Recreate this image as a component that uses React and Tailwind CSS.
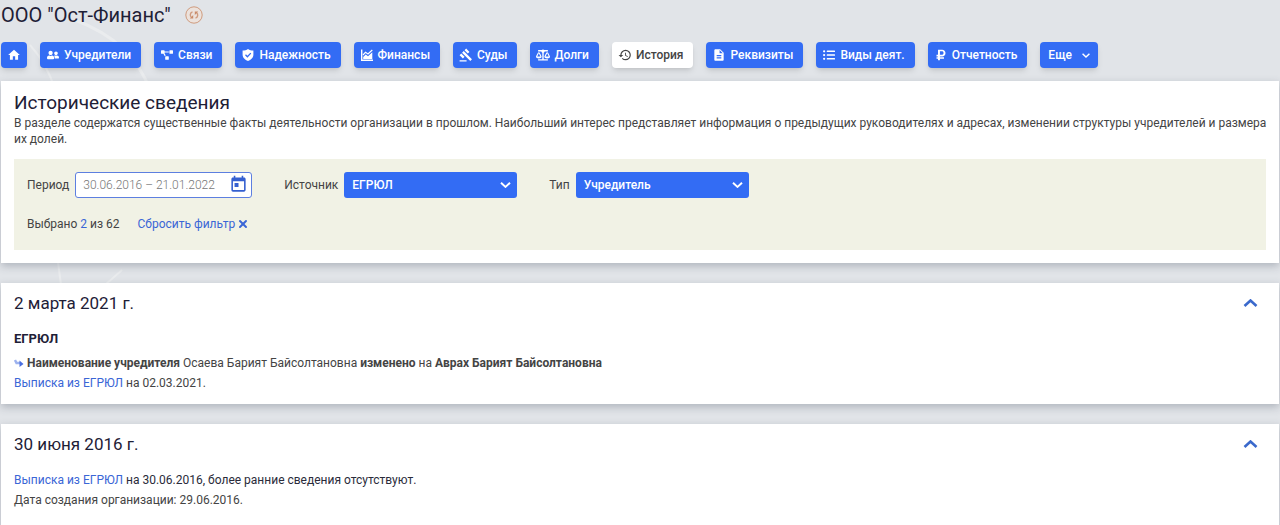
import React, { useState } from 'react';
import { FaBalanceScale, FaListUl, FaProjectDiagram, FaRubleSign, FaUserFriends } from 'react-icons/fa';
import { MdDescription, MdGavel, MdHistory, MdHome, MdToday } from 'react-icons/md';
import { X } from 'lucide-react';

function ShieldIcon({ className }) {
  return (
    <svg className={className} viewBox="0 0 12 12" fill="none">
      <path d="M6 0C4.500 1 2.700 1.500.6 1.500V5.500C.6 8.700 3 11 6 12c3-1 5.400-3.300 5.400-6.500v-4C9.300 1.500 7.500 1 6 0z" fill="currentColor" />
      <path d="M3.500 5.800l1.900 1.900 3.400-3.600" stroke="#336cf4" strokeWidth="1.3" />
    </svg>
  );
}

function ChartIcon({ className }) {
  return (
    <svg className={className} viewBox="0 0 12 12" fill="none" stroke="currentColor">
      <path d="M.7.500v10.800H12" strokeWidth="1.4" />
      <path d="M2 6l2.500-2.800L7 5l4.300-4" strokeWidth="1.2" />
      <path d="M2.200 10V8l2.500-2.600L7 7.200 11.300 3.200V10z" fill="currentColor" stroke="none" />
    </svg>
  );
}

function Chevron({ className }) {
  return (
    <svg className={className} viewBox="0 0 14 8" fill="none" stroke="currentColor" strokeWidth="2.6">
      <path d="M1 1l6 5.500L13 1" />
    </svg>
  );
}

const tabs = [
  { label: 'Учредители', icon: FaUserFriends, iconClass: 'p-px' },
  { label: 'Связи', icon: FaProjectDiagram, iconClass: 'p-px' },
  { label: 'Надежность', icon: ShieldIcon, iconClass: 'p-px' },
  { label: 'Финансы', icon: ChartIcon, iconClass: 'p-px' },
  { label: 'Суды', icon: MdGavel },
  { label: 'Долги', icon: FaBalanceScale },
  { label: 'История', icon: MdHistory, active: true },
  { label: 'Реквизиты', icon: MdDescription },
  { label: 'Виды деят.', icon: FaListUl, iconClass: 'p-px' },
  { label: 'Отчетность', icon: FaRubleSign, iconClass: 'p-px' },
];

function Tab({ label, icon: Icon, iconClass = '', active }) {
  const colors = active ? 'bg-white text-[#444]' : 'bg-[#336cf4] text-white';
  return (
    <a
      href="#"
      className={`flex h-[26px] items-center gap-1 rounded pl-1.5 pr-2.5 font-medium whitespace-nowrap shadow-md ${colors}`}
    >
      <Icon className={`size-[14px] shrink-0 ${iconClass}`} />
      {label}
    </a>
  );
}

function FilterSelect({ id, label, options }) {
  return (
    <div className="flex items-center gap-1.5">
      <label htmlFor={id}>{label}</label>
      <div className="relative">
        <select
          id={id}
          className="h-[26px] w-[173px] appearance-none rounded-[3px] bg-[#336cf4] pl-2 pr-6 font-medium text-white"
        >
          {options.map((o) => (
            <option key={o}>{o}</option>
          ))}
        </select>
        <Chevron className="pointer-events-none absolute top-[10px] right-[6px] h-[6px] w-[11px] text-white" />
      </div>
    </div>
  );
}

function Card({ children }) {
  return (
    <section className="mx-px bg-white px-[13px] shadow-[0_3px_8px_rgba(60,70,90,0.3)]">{children}</section>
  );
}

function HistoryCard({ date, children }) {
  const [open, setOpen] = useState(true);
  return (
    <Card>
      <div className="flex h-10 items-center justify-between pr-2">
        <h2 className="text-[17px] text-[#1e2036]">{date}</h2>
        <button type="button" aria-label={date} aria-expanded={open} onClick={() => setOpen(!open)}>
          <Chevron className={`h-2 w-[15px] text-[#3a69cc] ${open ? 'rotate-180' : ''}`} />
        </button>
      </div>
      {open && children}
    </Card>
  );
}

export default function App() {
  return (
    <div className="min-h-screen overflow-hidden bg-[#e1e4e8] font-[Roboto,sans-serif] text-[12px] leading-4 text-[#444]">
      <div className="relative">
        <svg className="absolute top-0 left-0 h-[290px] w-[350px]" viewBox="0 0 350 290" fill="none" stroke="#eaecee">
          <path d="M75 20C115 35 138 58 150 90" strokeWidth="3" />
          <path d="M30 45Q48 65 55 90M105 285L122 270M58 262L61 285" strokeWidth="2" />
        </svg>

        <header className="relative">
          <div className="flex h-[30px] items-center gap-3.5 pl-px">
            <h1 className="text-[20px] leading-6 text-[#1e2036]">ООО "Ост-Финанс"</h1>
            <svg className="size-[18px]" viewBox="0 0 18 18" fill="none" stroke="#cf9b7e">
              <circle cx="9" cy="9" r="8.200" strokeWidth="1" fill="#ece2dc" />
              <path d="M7.500 5.800C5 6.500 4.600 9.800 6.500 11.500M10.500 12.200C13 11.500 13.400 8.200 11.500 6.500" strokeWidth="1.400" />
              <path d="M4.800 12.500h3.400V9zM13.200 5.500H9.800V9z" fill="#c98a68" stroke="none" />
            </svg>
          </div>
          <nav className="flex flex-wrap gap-[13px] px-px pt-3 pb-[13px]">
            <a
              href="#"
              aria-label="Главная"
              className="flex h-[26px] w-[26px] items-center justify-center rounded bg-[#336cf4] text-white shadow-md"
            >
              <MdHome className="size-[14px]" />
            </a>
            {tabs.map((t) => (
              <Tab key={t.label} {...t} />
            ))}
            <button
              type="button"
              className="flex h-[26px] items-center gap-2.5 rounded bg-[#336cf4] px-2 font-medium text-white shadow-md"
            >
              Еще
              <Chevron className="h-[5px] w-2" />
            </button>
          </nav>
        </header>

        <main className="relative flex flex-col gap-5">
          <Card>
            <h2 className="pt-[10px] text-[19px] leading-6 text-[#1e2036]">Исторические сведения</h2>
            <p className="-mr-2">
              В разделе содержатся существенные факты деятельности организации в прошлом. Наибольший интерес
              представляет информация о предыдущих руководителях и адресах, изменении структуры учредителей и размера
              их долей.
            </p>
            <div className="pt-3 pb-[13px]">
              <form className="bg-[#f1f2e5] px-[13px] pt-[13px] pb-[18px]">
                <div className="flex flex-wrap items-center gap-8">
                  <div className="flex items-center gap-1.5">
                    <label htmlFor="period">Период</label>
                    <div className="relative">
                      <input
                        id="period"
                        type="text"
                        defaultValue="30.06.2016 – 21.01.2022"
                        className="h-[26px] w-[177px] rounded-[3px] border border-[#5d7fe0] bg-white pl-[7px] font-light text-[#777]"
                      />
                      <MdToday className="pointer-events-none absolute top-[3px] right-1 size-[19px] text-[#3560d0]" />
                    </div>
                  </div>
                  <FilterSelect id="source" label="Источник" options={['ЕГРЮЛ']} />
                  <FilterSelect id="type" label="Тип" options={['Учредитель']} />
                </div>
                <div className="flex items-center gap-[18px] pt-[18px]">
                  <span>
                    Выбрано <span className="text-[#3a66d6]">2</span> из 62
                  </span>
                  <button type="reset" className="flex items-center gap-0.5 text-[#3a66d6]">
                    Сбросить фильтр
                    <X className="size-3" strokeWidth={4} />
                  </button>
                </div>
              </form>
            </div>
          </Card>

          <HistoryCard date="2 марта 2021 г.">
            <div className="pt-2 pb-[13px]">
              <h3 className="text-[13px] leading-4 font-bold text-[#1e2036]">ЕГРЮЛ</h3>
              <p className="flex items-center gap-[3px] pt-2">
                <svg className="size-[10px]" viewBox="0 0 10 10" fill="none">
                  <path d="M1 2l1.500 3H6" stroke="#9db2ee" strokeWidth="2.400" />
                  <path d="M5.500 2.500L9.500 6l-4 3z" fill="#4a6fe0" />
                </svg>
                <span>
                  <b>Наименование учредителя</b> Осаева Барият Байсолтановна <b>изменено</b> на{' '}
                  <b>Аврах Барият Байсолтановна</b>
                </span>
              </p>
              <p className="pt-1">
                <a href="#" className="text-[#3a66d6]">Выписка из ЕГРЮЛ</a> на 02.03.2021.
              </p>
            </div>
          </HistoryCard>

          <HistoryCard date="30 июня 2016 г.">
            <div className="flex flex-col gap-1 pt-2 pb-10">
              <p className="text-[#2a2b3a]">
                <a href="#" className="text-[#3a66d6]">Выписка из ЕГРЮЛ</a> на 30.06.2016, более ранние сведения
                отсутствуют.
              </p>
              <p>Дата создания организации: 29.06.2016.</p>
            </div>
          </HistoryCard>
        </main>
      </div>
    </div>
  );
}
